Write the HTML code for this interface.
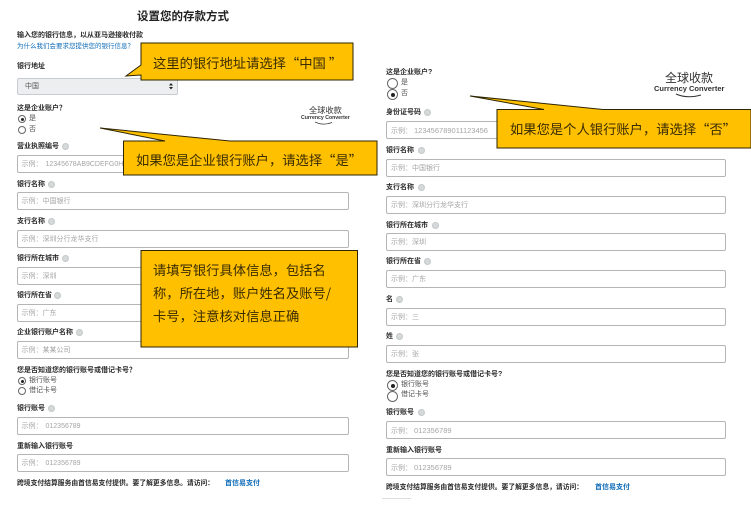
<!DOCTYPE html>
<html><head><meta charset="utf-8">
<style>
html,body{margin:0;padding:0;background:#fff}
#p{position:relative;width:751px;height:506px;overflow:hidden;font-family:"Liberation Sans","Noto Sans CJK SC",sans-serif;color:#222;filter:blur(.3px)}
.l,.t,.i,.r,.q,.b,.c,.a{position:absolute}
.l{font-size:7px;font-weight:700;line-height:10px;white-space:nowrap;color:#2b2b2b}
.t{font-size:7px;line-height:10px;white-space:nowrap;color:#555}
.i{box-sizing:border-box;height:18px;border:1px solid #b5b5b5;border-radius:2px;background:#fff;font-size:7px;line-height:17px;padding-left:4px;color:#a5a5a5;white-space:nowrap;overflow:hidden}
.n{left:17px;width:332px;padding-left:3.500px}
.m{left:386px;width:340px}
.i span{margin-left:3px}
.m span{margin-left:2px;font-size:7.500px}
.r{box-sizing:border-box;width:8px;height:8px;left:18px;border:1px solid #666;border-radius:50%;background:#fff}
.r.on::after{content:"";position:absolute;left:1.500px;top:1.500px;width:3px;height:3px;border-radius:50%;background:#222}
.r.g{width:11px;height:11px;left:387px}
.r.g.on::after{left:2.500px;top:2.500px;width:4px;height:4px}
.q{width:7px;height:7px;border-radius:50%;background:#d5d9d9;border:.5px solid #c4c8c8;box-sizing:border-box}
.c{font-family:"Noto Sans CJK SC",sans-serif;font-size:13.300px;color:#3a2c00;line-height:23px;white-space:nowrap}
.a{color:#0f6cb8;font-size:7px;line-height:10px;white-space:nowrap}
</style></head><body><div id="p">

<div class="l" style="left:137px;top:10px;font-size:11.500px;line-height:14px;color:#222">设置您的存款方式</div>
<div class="l" style="left:17px;top:31px">输入您的银行信息，以从亚马逊接收付款</div>
<div class="a" style="left:17px;top:42px;font-size:6.500px">为什么我们会要求您提供您的银行信息？</div>
<div class="l" style="left:17px;top:62px">银行地址</div>
<div class="i" style="left:17px;top:78px;width:161px;height:17px;background:#eceef0;border-color:#c8ccd0;color:#555;padding-left:7px;line-height:15px">中国</div>
<svg class="b" style="left:168px;top:83px" width="6" height="7"><path d="M3 0L5 2.500H1ZM3 6.500L1 4H5Z" fill="#222"/></svg>
<div class="l" style="left:17px;top:104px">这是企业账户？</div>
<div class="r on" style="top:115px"></div><div class="t" style="left:29px;top:114px">是</div>
<div class="r" style="top:126px"></div><div class="t" style="left:29px;top:125px">否</div>

<div class="l" style="left:309px;top:106px;font-size:8.200px;font-weight:400;color:#333">全球收款</div>
<div class="l" style="left:301px;top:113px;font-size:5.200px;color:#333">Currency Converter</div>
<svg class="b" style="left:315px;top:121px" width="20" height="5"><path d="M0 1Q8 5 17 1.500" fill="none" stroke="#333" stroke-width=".7"/></svg>

<div class="l" style="left:17px;top:142px">营业执照编号</div><div class="q" style="left:62px;top:143px"></div>
<div class="i n" style="top:155px">示例：<span>12345678AB9CDEFG0H</span></div>
<div class="l" style="left:17px;top:180px">银行名称</div><div class="q" style="left:48px;top:181px"></div>
<div class="i n" style="top:192px">示例：中国银行</div>
<div class="l" style="left:17px;top:217px">支行名称</div><div class="q" style="left:48px;top:218px"></div>
<div class="i n" style="top:230px">示例：深圳分行龙华支行</div>
<div class="l" style="left:17px;top:254px">银行所在城市</div><div class="q" style="left:62px;top:255px"></div>
<div class="i n" style="top:267px">示例：深圳</div>
<div class="l" style="left:17px;top:291px">银行所在省</div><div class="q" style="left:54px;top:292px"></div>
<div class="i n" style="top:304px">示例：广东</div>
<div class="l" style="left:17px;top:328px">企业银行账户名称</div><div class="q" style="left:76px;top:329px"></div>
<div class="i n" style="top:341px">示例：某某公司</div>
<div class="l" style="left:17px;top:366px">您是否知道您的银行账号或借记卡号？</div>
<div class="r on" style="top:377px"></div><div class="t" style="left:29px;top:376px">银行账号</div>
<div class="r" style="top:387px"></div><div class="t" style="left:29px;top:386px">借记卡号</div>
<div class="l" style="left:17px;top:404px">银行账号</div><div class="q" style="left:48px;top:405px"></div>
<div class="i n" style="top:417px">示例：<span>012356789</span></div>
<div class="l" style="left:17px;top:442px">重新输入银行账号</div>
<div class="i n" style="top:454px">示例：<span>012356789</span></div>
<div class="l" style="left:17px;top:479px;font-size:6.800px">跨境支付结算服务由首信易支付提供。要了解更多信息。请访问：</div>
<div class="a" style="left:225px;top:479px;font-weight:700">首信易支付</div>

<div class="l" style="left:386px;top:68px">这是企业账户?</div>
<div class="r g" style="top:78px"></div><div class="t" style="left:401px;top:78px">是</div>
<div class="r g on" style="top:89px"></div><div class="t" style="left:401px;top:89px">否</div>

<div class="l" style="left:665px;top:70px;font-size:12px;line-height:16px;font-weight:400;color:#333">全球收款</div>
<div class="l" style="left:654px;top:84px;font-size:7.500px;color:#333">Currency Converter</div>
<svg class="b" style="left:675px;top:93px" width="30" height="6"><path d="M1 1Q12 6 26 2" fill="none" stroke="#333"/></svg>

<div class="l" style="left:386px;top:108px">身份证号码</div><div class="q" style="left:424px;top:109px"></div>
<div class="i m" style="top:121px">示例：<span>123456789011123456</span></div>
<div class="l" style="left:386px;top:146px">银行名称</div><div class="q" style="left:418px;top:147px"></div>
<div class="i m" style="top:159px">示例：中国银行</div>
<div class="l" style="left:386px;top:183px">支行名称</div><div class="q" style="left:418px;top:184px"></div>
<div class="i m" style="top:196px">示例：深圳分行龙华支行</div>
<div class="l" style="left:386px;top:221px">银行所在城市</div><div class="q" style="left:432px;top:222px"></div>
<div class="i m" style="top:233px">示例：深圳</div>
<div class="l" style="left:386px;top:257px">银行所在省</div><div class="q" style="left:424px;top:258px"></div>
<div class="i m" style="top:270px">示例：广东</div>
<div class="l" style="left:386px;top:295px">名</div><div class="q" style="left:396px;top:296px"></div>
<div class="i m" style="top:308px">示例：三</div>
<div class="l" style="left:386px;top:332px">姓</div><div class="q" style="left:396px;top:333px"></div>
<div class="i m" style="top:345px">示例：张</div>
<div class="l" style="left:386px;top:370px">您是否知道您的银行账号或借记卡号?</div>
<div class="r g on" style="top:380px"></div><div class="t" style="left:401px;top:380px">银行账号</div>
<div class="r g" style="top:391px"></div><div class="t" style="left:401px;top:390px">借记卡号</div>
<div class="l" style="left:386px;top:408px">银行账号</div><div class="q" style="left:418px;top:409px"></div>
<div class="i m" style="top:421px">示例：<span>012356789</span></div>
<div class="l" style="left:386px;top:446px">重新输入银行账号</div>
<div class="i m" style="top:458px">示例：<span>012356789</span></div>
<div class="l" style="left:386px;top:483px;font-size:6.800px">跨境支付结算服务由首信易支付提供。要了解更多信息，请访问：</div>
<div class="a" style="left:595px;top:483px;font-weight:700">首信易支付</div>
<div class="b" style="left:382px;top:498px;width:29px;height:1px;background:#ddd"></div>

<svg class="b" style="left:0;top:0" width="751" height="506">
<g fill="#ffc000" stroke="#2e2500" stroke-width="1">
<path d="M141 43H353V80H141V75L126 76L141 65Z"/>
<path d="M123.500 141H165L100 128L230 141H377V175H123.500Z"/>
<path d="M141 250.500H357.500V347H141Z"/>
<path d="M497 109.500H544L470 96L603 109.500H751V148H497Z"/>
</g>
</svg>
<div class="c" style="left:153px;top:50.500px">这里的银行地址请选择“中国 ”</div>
<div class="c" style="left:136px;top:148px">如果您是企业银行账户，请选择“是”</div>
<div class="c" style="left:153px;top:257.500px">请填写银行具体信息，包括名</div>
<div class="c" style="left:153px;top:281px">称，所在地，账户姓名及账号/</div>
<div class="c" style="left:153px;top:304px">卡号，注意核对信息正确</div>
<div class="c" style="left:510px;top:116.500px">如果您是个人银行账户，请选择“否”</div>

</div></body></html>
